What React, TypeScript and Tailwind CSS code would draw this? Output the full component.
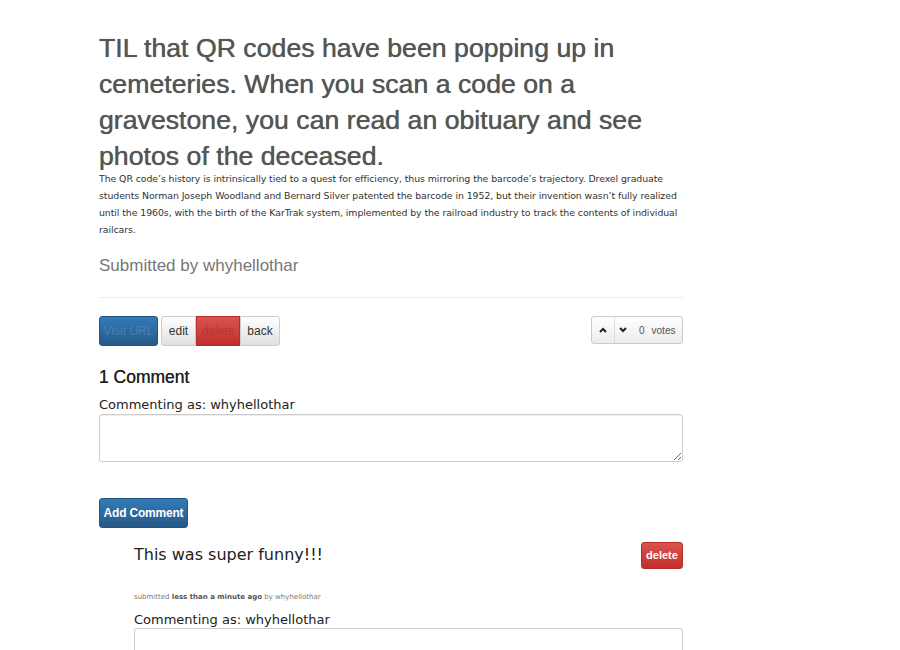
export default function App() {
  const body = { fontFamily: '"DejaVu Sans", Verdana, sans-serif' };
  const head = { fontFamily: '"Liberation Sans", Arial, sans-serif' };

  return (
    <div className="min-h-[650px] w-[900px] bg-white">
      <div className="ml-[99px] w-[584px] pt-[30px]">
        <h1 style={head} className="text-[26.7px] leading-[36px] text-[#555] [text-shadow:0_0_0.7px_#555]">
          TIL that QR codes have been popping up in cemeteries. When you scan a code on a gravestone, you can read an obituary and see photos of the deceased.
        </h1>
        <p style={body} className="-mt-[4px] text-[9.4px] leading-[17px] tracking-[-0.08px] text-[#333]">
          The QR code’s history is intrinsically tied to a quest for efficiency, thus mirroring the barcode’s trajectory. Drexel graduate students Norman Joseph Woodland and Bernard Silver patented the barcode in 1952, but their invention wasn’t fully realized until the 1960s, with the birth of the KarTrak system, implemented by the railroad industry to track the contents of individual railcars.
        </p>

        <h3 style={head} className="mt-[17px] text-[17px] leading-[22px] text-[#777]">Submitted by whyhellothar</h3>
        <hr className="mt-[20px] border-t border-[#eee]" />

        <div className="mt-[18px] flex items-start justify-between">
          <div style={head} className="flex items-center text-[12px]">
            <button className="h-[30px] w-[59px] rounded-[3px] border border-[#245580] bg-gradient-to-b from-[#337ab7] to-[#265a88] text-[#4f7fae]">Visit URL</button>
            <div className="ml-[3px] flex">
              <button className="h-[30px] w-[35px] rounded-l-[3px] border border-[#ccc] bg-gradient-to-b from-white to-[#e0e0e0] text-[#333]">edit</button>
              <button className="h-[30px] w-[44px] border border-[#b92c28] bg-gradient-to-b from-[#d9534f] to-[#c12e2a] text-[#b03a36]">delete</button>
              <button className="h-[30px] w-[40px] rounded-r-[3px] border border-[#ccc] bg-gradient-to-b from-white to-[#e0e0e0] text-[#333]">back</button>
            </div>
          </div>
          <div style={head} className="flex h-[28px] w-[92px] items-center rounded-[3px] border border-[#ccc] bg-gradient-to-b from-white to-[#ececec] text-[10px] text-[#555]">
            <span className="flex h-full w-[23px] items-center justify-center border-r border-[#ddd]">
              <svg width="8" height="6" viewBox="0 0 8 6"><path d="M1 5 L4 2 L7 5" stroke="#222" strokeWidth="2" fill="none" /></svg>
            </span>
            <span className="flex items-center pl-[4px]">
              <svg width="8" height="6" viewBox="0 0 8 6"><path d="M1 1 L4 4 L7 1" stroke="#222" strokeWidth="2" fill="none" /></svg>
              <span className="ml-[12px]">0</span>
              <span className="ml-[7px]">votes</span>
            </span>
          </div>
        </div>

        <h2 style={head} className="mt-[19px] text-[17.5px] leading-[24px] text-[#222] [text-shadow:0_0_0.4px_#222]">1 Comment</h2>
        <div style={body} className="mt-[8px] text-[13px] leading-[16px] text-[#222]">Commenting as: whyhellothar</div>
        <textarea className="mt-[1px] block h-[48px] w-full rounded-[3px] border border-[#ccc] shadow-[inset_0_1px_1px_rgba(0,0,0,0.075)]" />

        <button style={head} className="mt-[36px] h-[30px] w-[89px] whitespace-nowrap rounded-[3px] border border-[#245580] bg-gradient-to-b from-[#337ab7] to-[#265a88] text-[12px] font-bold tracking-[-0.2px] text-white">
          Add Comment
        </button>

        <div className="ml-[35px] mt-[13px]">
          <div className="flex items-start justify-between">
            <div style={body} className="pt-[3px] text-[16px] leading-[22px] text-[#222]">This was super funny!!!</div>
            <button style={head} className="mt-[1px] h-[27px] w-[42px] rounded-[3px] border border-[#b92c28] bg-gradient-to-b from-[#d9534f] to-[#c12e2a] text-[11px] font-bold text-white">delete</button>
          </div>
          <div style={body} className="mt-[23px] text-[7px] text-[#777]">
            submitted <b className="text-[#555]">less than a minute ago</b> by whyhellothar
          </div>
          <div style={body} className="mt-[9px] text-[13px] leading-[16px] text-[#222]">Commenting as: whyhellothar</div>
          <textarea className="block h-[48px] w-full rounded-[3px] border border-[#ccc]" />
        </div>
      </div>
    </div>
  );
}
